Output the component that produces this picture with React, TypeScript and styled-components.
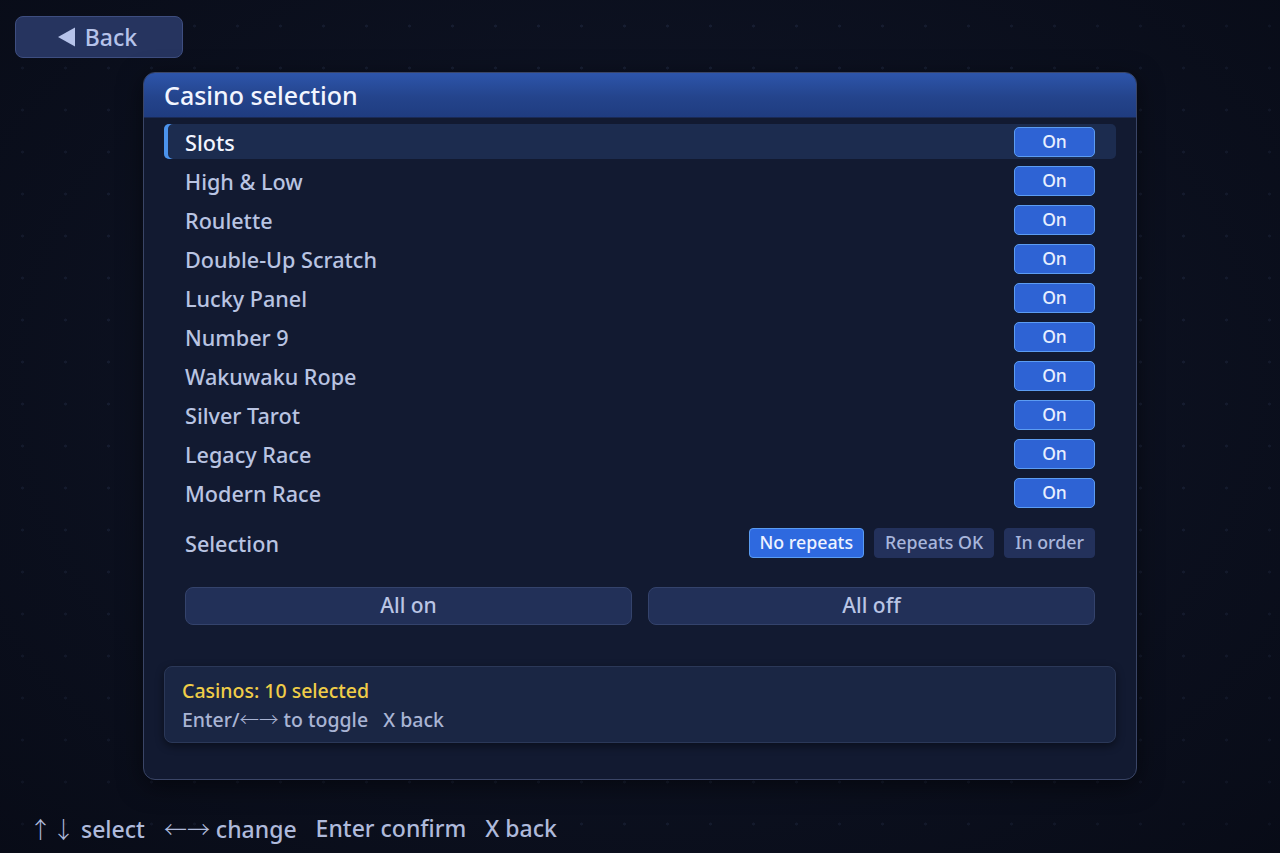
import React from "react";
import styled, { createGlobalStyle } from "styled-components";

const casinos = [
    "Slots",
    "High & Low",
    "Roulette",
    "Double-Up Scratch",
    "Lucky Panel",
    "Number 9",
    "Wakuwaku Rope",
    "Silver Tarot",
    "Legacy Race",
    "Modern Race",
];

const modes = ["No repeats", "Repeats OK", "In order"];

export default function App() {
    return (
        <>
            <GlobalStyle />
            <Page>
                <TopBar>
                    <BackButton>
                        <svg width="18" height="20" viewBox="0 0 18 20">
                            <path d="M0 10 L17 0.5 L17 19.5 Z" fill="#b6c3ea" />
                        </svg>
                        Back
                    </BackButton>
                </TopBar>
                <Main>
                    <Panel>
                        <PanelHeader>Casino selection</PanelHeader>
                        <PanelBody>
                            <List>
                                {casinos.map((name, i) => (
                                    <Row key={name} active={i === 0}>
                                        <RowLabel active={i === 0}>{name}</RowLabel>
                                        <ToggleButton>On</ToggleButton>
                                    </Row>
                                ))}
                            </List>
                            <SelectionRow>
                                <RowLabel>Selection</RowLabel>
                                <OptionGroup>
                                    {modes.map((m, i) => (
                                        <OptionButton key={m} selected={i === 0}>
                                            {m}
                                        </OptionButton>
                                    ))}
                                </OptionGroup>
                            </SelectionRow>
                            <BulkRow>
                                <BulkButton>All on</BulkButton>
                                <BulkButton>All off</BulkButton>
                            </BulkRow>
                            <InfoBox>
                                <InfoTitle>Casinos: 10 selected</InfoTitle>
                                <InfoHint>
                                    Enter/<Arrows>←→</Arrows> to toggle&nbsp;&nbsp; X back
                                </InfoHint>
                            </InfoBox>
                        </PanelBody>
                    </Panel>
                </Main>
                <Footer>
                    <FooterItem>
                        <Arrows>↑↓</Arrows> select
                    </FooterItem>
                    <FooterItem>
                        <Arrows>←→</Arrows> change
                    </FooterItem>
                    <FooterItem>Enter confirm</FooterItem>
                    <FooterItem>X back</FooterItem>
                </Footer>
            </Page>
        </>
    );
}

const GlobalStyle = createGlobalStyle`
    * {
        box-sizing: border-box;
    }
    body {
        margin: 0;
        background: #0b101e;
        font-family: "Noto Sans", "Open Sans", sans-serif;
    }
`;

const Page = styled.div`
    width: 1280px;
    height: 853px;
    overflow: hidden;
    display: flex;
    flex-direction: column;
    background:
        radial-gradient(ellipse at 50% 45%, rgba(20, 28, 52, 0) 40%, rgba(4, 6, 14, 0.55) 100%),
        radial-gradient(circle, rgba(110, 130, 190, 0.13) 1.2px, transparent 1.8px) 1px 5px / 43px 42px,
        #0d1222;
`;

const TopBar = styled.div`
    padding: 16px 0 0 15px;
    display: flex;
`;

const BackButton = styled.button`
    width: 168px;
    height: 42px;
    display: flex;
    align-items: center;
    justify-content: center;
    gap: 9px;
    background: #26345f;
    border: 1.5px solid #3e4e80;
    border-radius: 8px;
    color: #b6c3ea;
    font-family: "Noto Sans", sans-serif;
    font-size: 23px;
    font-weight: 500;
    padding: 0 3px 1px 0;
`;

const Main = styled.div`
    display: flex;
    justify-content: center;
    margin-top: 14px;
`;

const Panel = styled.div`
    width: 994px;
    height: 708px;
    background: #121a31;
    border: 1.5px solid #3a4566;
    border-radius: 12px;
    overflow: hidden;
    box-shadow: 0 6px 24px rgba(0, 0, 0, 0.5);
    display: flex;
    flex-direction: column;
`;

const PanelHeader = styled.div`
    height: 45px;
    flex-shrink: 0;
    display: flex;
    align-items: center;
    padding: 0 0 1px 20px;
    background: linear-gradient(180deg, #2d55ab 0%, #24448c 55%, #1f3c80 100%);
    border-bottom: 1px solid #1a2a55;
    color: #f2f5ff;
    font-size: 25px;
    font-weight: 500;
`;

const PanelBody = styled.div`
    display: flex;
    flex-direction: column;
    padding: 6px 20px 0;
`;

const List = styled.div`
    display: flex;
    flex-direction: column;
    gap: 4px;
`;

const Row = styled.div<{ active?: boolean }>`
    height: 35px;
    display: flex;
    align-items: center;
    justify-content: space-between;
    padding: 0 21px 0 21px;
    border-radius: 5px;
    background: ${(p) => (p.active ? "#1c2c4f" : "transparent")};
    box-shadow: ${(p) => (p.active ? "inset 4px 0 0 #4b93ec" : "none")};
`;

const RowLabel = styled.span<{ active?: boolean }>`
    font-size: 21.6px;
    font-weight: 500;
    color: ${(p) => (p.active ? "#f2f5ff" : "#b9c4e2")};
    padding-top: 1px;
`;

const ToggleButton = styled.button`
    width: 81px;
    height: 30px;
    background: #2e63d4;
    border: 1.5px solid #5c9cf2;
    border-radius: 5px;
    color: #e8efff;
    font-family: "Noto Sans", sans-serif;
    font-size: 17.5px;
    font-weight: 500;
    padding: 0 0 2px;
`;

const SelectionRow = styled.div`
    height: 40px;
    margin-top: 13px;
    display: flex;
    align-items: center;
    justify-content: space-between;
    padding: 0 21px;
`;

const OptionGroup = styled.div`
    display: flex;
    gap: 10px;
`;

const OptionButton = styled.button<{ selected?: boolean }>`
    height: 30px;
    padding: 0 10px 2px;
    border-radius: 4px;
    border: 1.5px solid ${(p) => (p.selected ? "#5a9cf2" : "#23315b")};
    background: ${(p) => (p.selected ? "#2e69df" : "#23315b")};
    color: ${(p) => (p.selected ? "#eef3ff" : "#a8b6dc")};
    font-family: "Noto Sans", sans-serif;
    font-size: 17.8px;
    font-weight: 500;
`;

const BulkRow = styled.div`
    display: grid;
    grid-template-columns: 1fr 1fr;
    gap: 16px;
    padding: 0 21px;
    margin-top: 24px;
`;

const BulkButton = styled.button`
    height: 38px;
    background: #223058;
    border: 1.5px solid #34436c;
    border-radius: 8px;
    color: #bac5e5;
    font-family: "Noto Sans", sans-serif;
    font-size: 21px;
    font-weight: 500;
    padding: 0 0 2px;
`;

const InfoBox = styled.div`
    margin-top: 41px;
    height: 77px;
    padding: 10px 17px 10px;
    background: #1a2644;
    border: 1.5px solid #2b3858;
    border-radius: 8px;
    box-shadow: 0 3px 8px rgba(0, 0, 0, 0.45);
`;

const InfoTitle = styled.div`
    color: #f0cd48;
    font-size: 19.5px;
    font-weight: 500;
    line-height: 28px;
`;

const InfoHint = styled.div`
    color: #a9b4d4;
    font-size: 19.5px;
    font-weight: 500;
    line-height: 28px;
`;

const Arrows = styled.span`
    font-family: "Noto Sans CJK JP", "DejaVu Sans", sans-serif;
    font-weight: 300;
`;

const Footer = styled.div`
    margin-top: auto;
    height: 54px;
    display: flex;
    align-items: center;
    gap: 19px;
    padding: 3px 0 0 29px;
    color: #afbadb;
    font-size: 23px;
    font-weight: 500;
`;

const FooterItem = styled.span`
    white-space: pre;
`;
